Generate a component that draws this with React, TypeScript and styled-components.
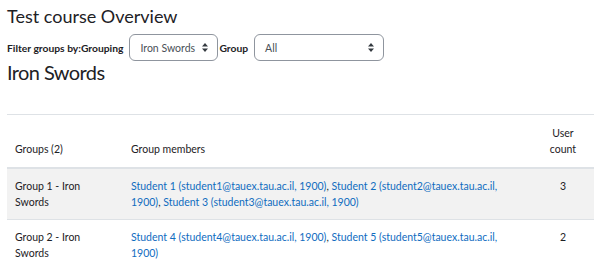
import React from "react";
import styled, { createGlobalStyle } from "styled-components";

const GlobalStyle = createGlobalStyle`
  body {
    margin: 0;
    background: #ffffff;
    font-family: "Lato", "Noto Sans", sans-serif;
    color: #1d2125;
  }
`;

const Page = styled.div`
  padding: 0 6px 0 7px;
`;

const Title = styled.h2`
  margin: 4px 0 0 0;
  font-size: 18px;
  line-height: 24px;
  font-weight: 400;
`;

const FilterRow = styled.form`
  display: flex;
  align-items: center;
  margin-top: 6px;
  height: 27px;
`;

const FilterLabel = styled.label<{ $gapRight: number }>`
  font-size: 10.3px;
  font-weight: 700;
  margin-right: ${(p) => p.$gapRight}px;
  white-space: nowrap;
`;

const SelectBox = styled.div<{ $width: number }>`
  box-sizing: border-box;
  width: ${(p) => p.$width}px;
  height: 27px;
  border: 1px solid #8f959e;
  border-radius: 6px;
  display: flex;
  align-items: center;
  justify-content: space-between;
  padding: 0 9px 0 10px;
  font-size: 10.5px;
  color: #495057;
  margin-right: 1px;
`;

const Arrows = styled.svg`
  width: 6px;
  height: 9px;
  flex: none;
`;

const SubTitle = styled.h3`
  margin: 0;
  font-size: 20px;
  line-height: 22px;
  letter-spacing: -0.6px;
  font-weight: 400;
`;

const Table = styled.table`
  margin-top: 31px;
  width: 587px;
  border-collapse: collapse;
  table-layout: fixed;
  font-size: 10.5px;
  line-height: 16.5px;
`;

const HeadCell = styled.th<{ $align?: string }>`
  font-weight: 400;
  text-align: ${(p) => p.$align || "left"};
  vertical-align: bottom;
  padding: 9.5px 8px;
  border-top: 1px solid #dee2e6;
  border-bottom: 2px solid #dee2e6;
`;

const Row = styled.tr<{ $striped?: boolean }>`
  background: ${(p) => (p.$striped ? "#f2f2f2" : "transparent")};
`;

const Cell = styled.td<{ $align?: string }>`
  text-align: ${(p) => p.$align || "left"};
  vertical-align: top;
  padding: 8.5px 8px;
  border-top: 1px solid #dee2e6;
`;

const Member = styled.a`
  color: #0f6cbf;
  text-decoration: none;
`;

const ArrowIcon = () => (
  <Arrows viewBox="0 0 6 9">
    <path d="M0 3.5 L3 0 L6 3.5 Z M0 5.5 L3 9 L6 5.5 Z" fill="#343a40" />
  </Arrows>
);

const groups = [
  {
    name: "Group 1 - Iron Swords",
    members: [
      "Student 1 (student1@tauex.tau.ac.il, 1900)",
      "Student 2 (student2@tauex.tau.ac.il, 1900)",
      "Student 3 (student3@tauex.tau.ac.il, 1900)",
    ],
  },
  {
    name: "Group 2 - Iron Swords",
    members: [
      "Student 4 (student4@tauex.tau.ac.il, 1900)",
      "Student 5 (student5@tauex.tau.ac.il, 1900)",
    ],
  },
];

export default function App() {
  return (
    <Page>
      <GlobalStyle />
      <Title>Test course Overview</Title>
      <FilterRow>
        <FilterLabel $gapRight={6}>Filter groups by:Grouping</FilterLabel>
        <SelectBox $width={89}>
          <span>Iron Swords</span>
          <ArrowIcon />
        </SelectBox>
        <FilterLabel $gapRight={6}>Group</FilterLabel>
        <SelectBox $width={130}>
          <span>All</span>
          <ArrowIcon />
        </SelectBox>
      </FilterRow>
      <SubTitle>Iron Swords</SubTitle>
      <Table>
        <colgroup>
          <col style={{ width: 116 }} />
          <col style={{ width: 409 }} />
          <col style={{ width: 62 }} />
        </colgroup>
        <thead>
          <tr>
            <HeadCell>Groups (2)</HeadCell>
            <HeadCell>Group members</HeadCell>
            <HeadCell $align="center">User count</HeadCell>
          </tr>
        </thead>
        <tbody>
          {groups.map((g, i) => (
            <Row key={g.name} $striped={i % 2 === 0}>
              <Cell>{g.name}</Cell>
              <Cell>
                {g.members.map((m, j) => (
                  <React.Fragment key={m}>
                    <Member href="#">{m}</Member>
                    {j < g.members.length - 1 ? ", " : ""}
                  </React.Fragment>
                ))}
              </Cell>
              <Cell $align="center">{g.members.length}</Cell>
            </Row>
          ))}
        </tbody>
      </Table>
    </Page>
  );
}
